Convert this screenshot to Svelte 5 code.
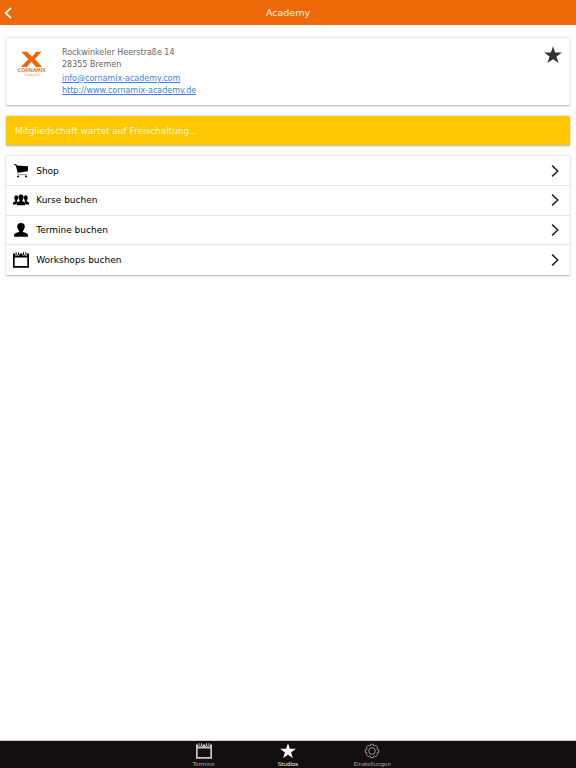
<script lang="ts">
  const studio = {
    title: 'Academy',
    street: 'Rockwinkeler Heerstraße 14',
    city: '28355 Bremen',
    email: 'info@cornamix-academy.com',
    website: 'http://www.cornamix-academy.de'
  };

  const menu = [
    { icon: 'cart', label: 'Shop' },
    { icon: 'group', label: 'Kurse buchen' },
    { icon: 'person', label: 'Termine buchen' },
    { icon: 'calendar', label: 'Workshops buchen' }
  ];

  const tabs = [
    { icon: 'calendar', label: 'Termine' },
    { icon: 'star', label: 'Studios' },
    { icon: 'gear', label: 'Einstellungen' }
  ];

  let activeTab = $state('Studios');

  // Outline of the settings gear: eight flat teeth around the centre
  const gearPath = Array.from({ length: 8 }, (_, i) => {
    const points = [[-0.27, 5.6], [-0.2, 6.9], [0.2, 6.9], [0.27, 5.6]];
    return points
      .map(([offset, r]) => {
        const a = (i * Math.PI) / 4 + offset;
        return `${(8 + r * Math.sin(a)).toFixed(2)} ${(8 - r * Math.cos(a)).toFixed(2)}`;
      })
      .join('L');
  }).join('L');
</script>

{#snippet icon(name: string)}
  <svg class="icon" viewBox="0 0 16 16" fill="currentColor">
    {#if name === 'cart'}
      <path d="M1 .9 3.4 1.6 4 2.5 15 3.3 14.9 8.3 4.7 9.7 3.2 4.2 2.6 2.6.8 1.7Z" />
      <path d="M4.7 9.6 5.2 11.7H14.2" fill="none" stroke="#777" stroke-width=".8" />
      <circle cx="5" cy="13.6" r="1" />
      <circle cx="13" cy="13.6" r="1" />
    {:else if name === 'group'}
      <path d="M0 12.5V10.8Q.4 9.9 2.1 9.4 2.6 9 2 8.2 1.1 6.5 1.3 5.2 1.6 3.2 3.2 3.2 4.9 3.2 5.1 5.2 5.3 6.6 4.2 8.2 3.8 9 4.3 9.4L4.8 9.7Q3.6 10.3 3.6 12.5Z" />
      <path d="M16 12.5V10.8Q15.6 9.9 13.9 9.4 13.4 9 14 8.2 14.9 6.5 14.7 5.2 14.4 3.2 12.8 3.2 11.1 3.2 10.9 5.2 10.7 6.6 11.8 8.2 12.2 9 11.7 9.4L11.2 9.7Q12.4 10.3 12.4 12.5Z" />
      <path d="M4 13.2V11.2Q4.4 9.9 6.6 9.3 7 8.7 6.4 7.9 5.2 6.3 5.4 4.6 5.7 2.4 8 2.4 10.3 2.4 10.6 4.6 10.8 6.3 9.6 7.9 9 8.7 9.4 9.3 11.6 9.9 12 11.2V13.2Z" />
    {:else if name === 'person'}
      <path d="M1.1 14.8V12.6Q1.8 11.1 6.1 10.1 6.4 9.3 5.6 8.3 4 6.4 4.2 4 4.5.9 8 .9 11.5.9 11.8 4 12 6.4 10.4 8.3 9.6 9.3 9.9 10.1 14.2 11.1 14.9 12.6V14.8Z" />
    {:else if name === 'calendar'}
      <path fill-rule="evenodd" d="M0 1.4H2V3Q3.1 4.3 4.2 3V1.4H4.4V3Q5.5 4.3 6.6 3V1.4H9.4V3Q10.5 4.3 11.6 3V1.4H11.8V3Q12.9 4.3 14 3V1.4H16V15.8H0ZM1.7 5.5V14H14.3V5.5Z" />
      <path d="M2.6.2H3.6V3.1H2.6ZM5 .2H6V3.1H5ZM10 .2H11V3.1H10ZM12.4.2H13.4V3.1H12.4Z" />
    {:else if name === 'star'}
      <path d="M8 .2 9.9 5.8H15.9L11.1 9.4 12.9 15.1 8 11.7 3.1 15.1 4.9 9.4.1 5.8H6.1Z" />
    {:else}
      <path d={`M${gearPath}Z`} fill="none" stroke="currentColor" stroke-width=".7" stroke-linejoin="round" />
      <circle cx="8" cy="8" r="3.3" fill="none" stroke="currentColor" stroke-width=".7" />
    {/if}
  </svg>
{/snippet}

<div class="app">
  <header class="navbar">
    <button class="back" aria-label="Zurück">
      <svg viewBox="0 0 8 12"><path d="M7 .9 1.6 6 7 11.1" /></svg>
    </button>
    <h1>{studio.title}</h1>
  </header>

  <main>
    <section class="card studio">
      <svg class="logo" viewBox="0 0 30 28" role="img" aria-label="Cornamix Academy">
        <path d="M4.2.8H10.1L15 5.8 19.2.8H24.4L17.9 8 25 16H19L14.3 10.8 9.8 16H3.9L11.3 8.2Z" />
        <text class="brand" x="0.6" y="21.1" textLength="28.2" lengthAdjust="spacingAndGlyphs">CORNAMIX</text>
        <text class="sub" x="7" y="25" textLength="16" lengthAdjust="spacingAndGlyphs">Academy</text>
      </svg>
      <div class="address">
        <div>{studio.street}</div>
        <div>{studio.city}</div>
        <a href={`mailto:${studio.email}`}>{studio.email}</a>
        <a href={studio.website}>{studio.website}</a>
      </div>
      <button class="favorite" aria-label="Favorit">{@render icon('star')}</button>
    </section>

    <section class="card notice">Mitgliedschaft wartet auf Freischaltung...</section>

    <nav class="card menu">
      {#each menu as item}
        <button class="menu-item">
          {@render icon(item.icon)}
          <span>{item.label}</span>
          <svg class="chevron" viewBox="0 0 8 12"><path d="M1.1.6 6.8 6 1.1 11.4" /></svg>
        </button>
      {/each}
    </nav>
  </main>

  <footer class="tabbar">
    {#each tabs as tab}
      <button class="tab" class:active={activeTab === tab.label} onclick={() => (activeTab = tab.label)}>
        {@render icon(tab.icon)}
        <span>{tab.label}</span>
      </button>
    {/each}
  </footer>
</div>

<style>
  .app {
    height: 100vh;
    display: flex;
    flex-direction: column;
    background: #fefefe;
    font-family: 'DejaVu Sans', sans-serif;
  }

  button {
    border: 0;
    padding: 0;
    background: none;
    color: inherit;
    font-family: inherit;
    cursor: pointer;
  }

  svg {
    display: block;
    flex-shrink: 0;
  }

  .icon {
    width: 16px;
    height: 16px;
  }

  .navbar {
    height: 25px;
    display: grid;
    grid-template-columns: 20px 1fr 20px;
    align-items: center;
    background: #ed6908;
    color: #fff;
  }

  .back {
    padding-left: 4px;
  }

  .back svg {
    width: 8px;
    height: 12px;
    fill: none;
    stroke: #fff;
    stroke-width: 1.8;
  }

  h1 {
    margin: 0;
    text-align: center;
    font-size: 9.5px;
    font-weight: 400;
    line-height: 25px;
    color: #fff0e5;
  }

  main {
    flex: 1;
    padding: 13px 6px 0;
  }

  .card {
    background: #fff;
    border-radius: 1.5px;
    box-shadow: 0 0.6px 2px rgba(0, 0, 0, 0.32);
  }

  .studio {
    height: 67px;
    box-sizing: border-box;
    display: flex;
    align-items: flex-start;
    padding: 8px 8.5px 0 11px;
  }

  .logo {
    width: 30px;
    height: 28px;
    margin-top: 5px;
    fill: #ed6908;
    overflow: visible;
  }

  .brand {
    font-size: 5px;
    font-weight: 400;
    stroke: #ed6908;
    stroke-width: 0.15px;
  }

  .sub {
    font-size: 3.8px;
    fill: #f3a268;
  }

  .address {
    flex: 1;
    margin: 0.8px 0 0 15px;
    font-size: 8px;
    line-height: 12.6px;
    color: #666;
  }

  .address a {
    display: block;
    color: #3b82ec;
  }

  .address div + a {
    margin-top: 0.6px;
  }

  .favorite {
    color: #333;
  }

  .favorite :global(.icon) {
    width: 18px;
    height: 18px;
  }

  .notice {
    height: 29px;
    margin-top: 11px;
    padding-left: 9px;
    background: #ffc800;
    color: #fff6d0;
    font-size: 8.95px;
    line-height: 30px;
  }

  .menu {
    margin-top: 11px;
  }

  .menu-item {
    width: 100%;
    height: 29.8px;
    box-sizing: border-box;
    display: flex;
    align-items: center;
    padding: 0.6px 11px 0 7px;
    border-bottom: 1px solid #e6e6e6;
    color: #000;
    font-size: 9px;
    text-align: left;
  }

  .menu-item:last-child {
    border-bottom-color: transparent;
  }

  .menu-item span {
    flex: 1;
    margin-left: 7.2px;
  }

  .chevron {
    width: 8px;
    height: 12px;
    fill: none;
    stroke: #222;
    stroke-width: 1.5;
  }

  .tabbar {
    height: 27px;
    display: flex;
    justify-content: center;
    background: #130f10;
    border-top: 1px solid #c9cec6;
    background-clip: padding-box;
  }

  .tab {
    width: 84.3px;
    display: flex;
    flex-direction: column;
    align-items: center;
    padding-top: 2px;
    color: #c4c4c4;
    font-size: 5.5px;
  }

  .tab span {
    margin-top: 1.5px;
    line-height: 7px;
    color: #b0b0b0;
  }

  .tab.active,
  .tab.active span {
    color: #fff;
  }
</style>
